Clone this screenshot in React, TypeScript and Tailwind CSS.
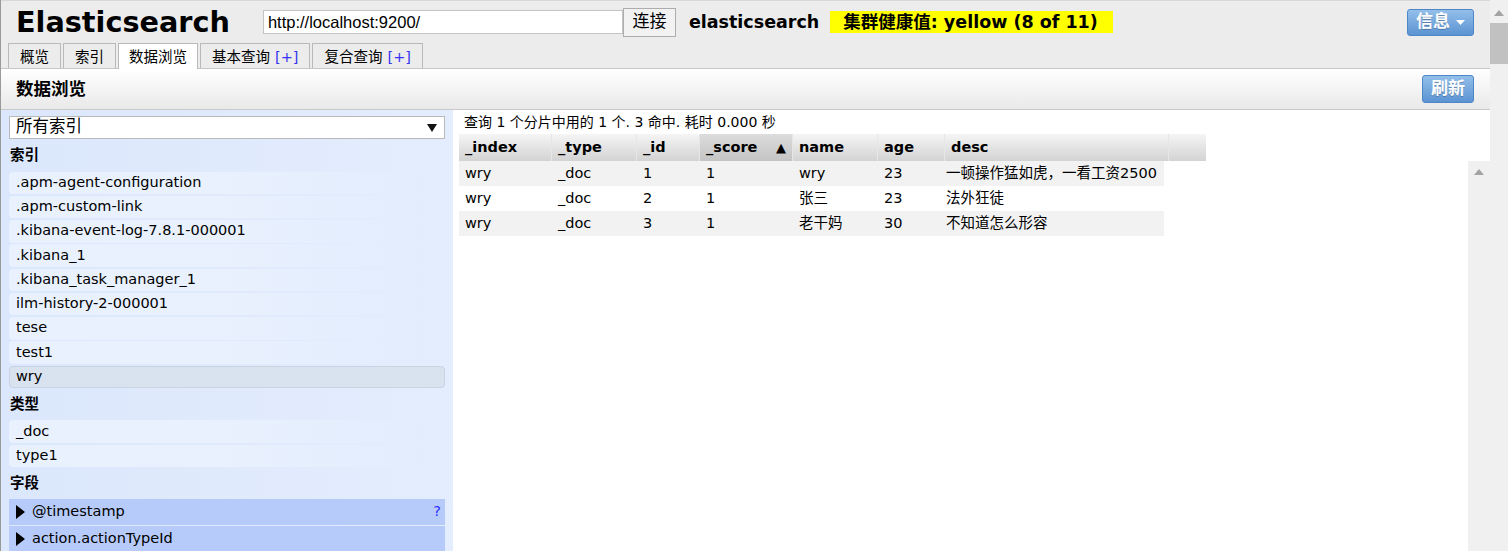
import React from 'react';

const indices = [
  '.apm-agent-configuration',
  '.apm-custom-link',
  '.kibana-event-log-7.8.1-000001',
  '.kibana_1',
  '.kibana_task_manager_1',
  'ilm-history-2-000001',
  'tese',
  'test1',
];

const cols = [
  { key: '_index', w: 'w-[93px]' },
  { key: '_type', w: 'w-[85px]' },
  { key: '_id', w: 'w-[63px]' },
  { key: '_score', w: 'w-[93px]' },
  { key: 'name', w: 'w-[85px]' },
  { key: 'age', w: 'w-[67px]' },
];

const rows = [
  ['wry', '_doc', '1', '1', 'wry', '23', '一顿操作猛如虎，一看工资2500'],
  ['wry', '_doc', '2', '1', '张三', '23', '法外狂徒'],
  ['wry', '_doc', '3', '1', '老干妈', '30', '不知道怎么形容'],
];

function BlueButton({ children }: { children: React.ReactNode }) {
  return (
    <button className="flex items-center gap-[6px] rounded-[3px] border border-[#4f86c6] bg-gradient-to-b from-[#93bfea] to-[#5b93d2] px-[8px] text-[17px] font-bold text-white [text-shadow:0_1px_0_rgba(0,0,0,0.25)]">
      {children}
    </button>
  );
}

function SectionTitle({ children }: { children: React.ReactNode }) {
  return <div className="flex h-[30.5px] items-center pl-px text-[14.5px] font-bold">{children}</div>;
}

function Item({ children, selected }: { children: React.ReactNode; selected?: boolean }) {
  if (selected) {
    return (
      <div className="mb-[1.75px] flex h-[22.5px] items-center rounded-[4px] border border-[#c9d3e1] bg-[#d9e2ef] pl-[6px] text-[14.5px]">
        {children}
      </div>
    );
  }
  return (
    <div className="mb-[1.75px] flex h-[22.5px] w-[420px] items-center rounded-[4px] bg-gradient-to-r from-[#e9f1fe] via-[#e9f1fe] to-[#e2ecfd] pl-[7px] text-[14.5px]">
      {children}
    </div>
  );
}

function Field({ name, help }: { name: string; help?: boolean }) {
  return (
    <div className="mb-px flex h-[26px] items-center bg-[#b7cbfb] pl-[7px] pr-[4px] text-[14.5px]">
      <svg width="9" height="14" viewBox="0 0 9 14" className="mr-[7px]">
        <path d="M0 0 L9 7 L0 14 Z" fill="#000" />
      </svg>
      <span className="flex-1">{name}</span>
      {help && <span className="text-[#2b2bff]">?</span>}
    </div>
  );
}

export default function App() {
  return (
    <div className="flex h-[551px] w-[1508px] overflow-hidden bg-white font-['DejaVu_Sans','Noto_Sans_CJK_SC',sans-serif] text-black">
      <div className="flex min-w-0 flex-1 flex-col border-l border-[#9a9a9a]">
        {/* top header */}
        <div className="h-[69px] shrink-0 border-b border-t border-[#c6c6c6] border-t-[#d8d8d8] bg-[#ececec]">
          <div className="flex h-[42px] items-center pl-[15px] pr-[16px]">
            <h1 className="text-[28.7px] font-bold leading-none">Elasticsearch</h1>
            <div className="ml-[33px] flex h-[24px] w-[360px] items-center border border-[#c4c4c4] bg-white pl-[4px] font-['Liberation_Sans',sans-serif] text-[16.5px]">
              http://localhost:9200/
            </div>
            <button className="flex h-[29px] w-[53px] items-center justify-center border border-[#adadad] bg-[#f2f2f2] font-['Liberation_Sans','Noto_Sans_CJK_SC',sans-serif] text-[17px]">
              连接
            </button>
            <span className="ml-[13px] text-[17.5px] font-bold">elasticsearch</span>
            <span className="ml-[11px] flex h-[22px] w-[283px] items-center bg-[#ffff00] pl-[13px] text-[17.5px] font-bold">
              集群健康值: yellow (8 of 11)
            </span>
            <div className="ml-auto flex h-[27px]">
              <BlueButton>
                信息
                <svg width="9" height="5" viewBox="0 0 9 5">
                  <path d="M0 0 L9 0 L4.5 5 Z" fill="#fff" />
                </svg>
              </BlueButton>
            </div>
          </div>
          <div className="flex h-[25px] items-end gap-[2px] pl-[7px] text-[14.5px]">
            {['概览', '索引'].map((t) => (
              <div key={t} className="flex h-[25px] items-center border border-b-0 border-[#b9b9b9] px-[11px] pt-[4px]">
                {t}
              </div>
            ))}
            <div className="relative -mb-px flex h-[26px] items-center border border-b-0 border-[#b9b9b9] bg-white px-[10px] pt-[3px]">
              数据浏览
            </div>
            {['基本查询', '复合查询'].map((t) => (
              <div key={t} className="flex h-[25px] items-center border border-b-0 border-[#b9b9b9] px-[11px] pt-[4px]">
                {t}
                <span className="ml-[5px] text-[#3434f0]">[+]</span>
              </div>
            ))}
          </div>
        </div>

        {/* section header */}
        <div className="flex h-[41px] shrink-0 items-center justify-between border-b border-[#c9c9c9] bg-gradient-to-b from-white to-[#e9e9e9] pl-[15px] pr-[16px]">
          <span className="text-[17.5px] font-bold">数据浏览</span>
          <div className="flex h-[28px]">
            <BlueButton>刷新</BlueButton>
          </div>
        </div>

        {/* body */}
        <div className="flex min-h-0 flex-1">
          <div className="w-[452px] shrink-0 bg-gradient-to-r from-[#dbe7fc] to-[#e4edfd] px-[8px] pt-[6px]">
            <div className="mb-[2px] flex h-[23px] items-center justify-between border border-[#b9b9b9] bg-white pl-[6px] pr-[7px] text-[16.5px]">
              <span>所有索引</span>
              <svg width="10" height="8" viewBox="0 0 10 8">
                <path d="M0 0 L10 0 L5 8 Z" fill="#111" />
              </svg>
            </div>
            <SectionTitle>索引</SectionTitle>
            {indices.map((i) => (
              <Item key={i}>{i}</Item>
            ))}
            <Item selected>wry</Item>
            <SectionTitle>类型</SectionTitle>
            <Item>_doc</Item>
            <Item>type1</Item>
            <SectionTitle>字段</SectionTitle>
            <Field name="@timestamp" help />
            <Field name="action.actionTypeId" />
          </div>

          <div className="flex min-w-0 flex-1 flex-col">
            <div className="flex h-[24px] shrink-0 items-center pl-[11px] text-[14px]">
              查询 1 个分片中用的 1 个. 3 命中. 耗时 0.000 秒
            </div>
            <div className="flex h-[27px] shrink-0 pl-[6px] text-[14.5px] font-bold">
              {cols.map((c) => (
                <div
                  key={c.key}
                  className={`${c.w} flex items-center border-r border-[#e6e6e6] pl-[6px] ${
                    c.key === '_score'
                      ? 'bg-gradient-to-b from-[#dcdcdc] to-[#c4c4c4]'
                      : 'bg-gradient-to-b from-[#f5f5f5] to-[#d3d3d3]'
                  }`}
                >
                  {c.key}
                  {c.key === '_score' && <span className="ml-auto pr-[6px] text-[13px]">▲</span>}
                </div>
              ))}
              <div className="flex w-[224px] items-center border-r border-[#e6e6e6] bg-gradient-to-b from-[#f5f5f5] to-[#d3d3d3] pl-[6px]">
                desc
              </div>
              <div className="w-[37px] bg-gradient-to-b from-[#f5f5f5] to-[#d3d3d3]" />
            </div>
            <div className="flex min-h-0 flex-1">
              <div className="flex-1 pl-[6px] text-[14.5px]">
                {rows.map((r, ri) => (
                  <div key={ri} className={`flex h-[25px] w-[705px] items-center ${ri % 2 === 0 ? 'bg-[#f2f2f2]' : 'bg-white'}`}>
                    {r.slice(0, 6).map((v, ci) => (
                      <div key={ci} className={`${cols[ci].w} pl-[6px]`}>
                        {v}
                      </div>
                    ))}
                    <div className="w-[219px] whitespace-nowrap pl-px">{r[6]}</div>
                  </div>
                ))}
              </div>
              <div className="flex w-[22px] shrink-0 justify-center bg-[#f0f0f0] pt-[8px]">
                <svg width="10" height="6" viewBox="0 0 10 6">
                  <path d="M0 6 L5 0 L10 6 Z" fill="#a3a3a3" />
                </svg>
              </div>
            </div>
          </div>
        </div>
      </div>

      {/* page scrollbar */}
      <div className="flex w-[18px] shrink-0 flex-col items-center bg-[#f0f0f0] pt-[10px]">
        <svg width="10" height="6" viewBox="0 0 10 6">
          <path d="M0 6 L5 0 L10 6 Z" fill="#a3a3a3" />
        </svg>
        <div className="mt-[7px] h-[41px] w-full bg-[#c1c1c1]" />
      </div>
    </div>
  );
}
